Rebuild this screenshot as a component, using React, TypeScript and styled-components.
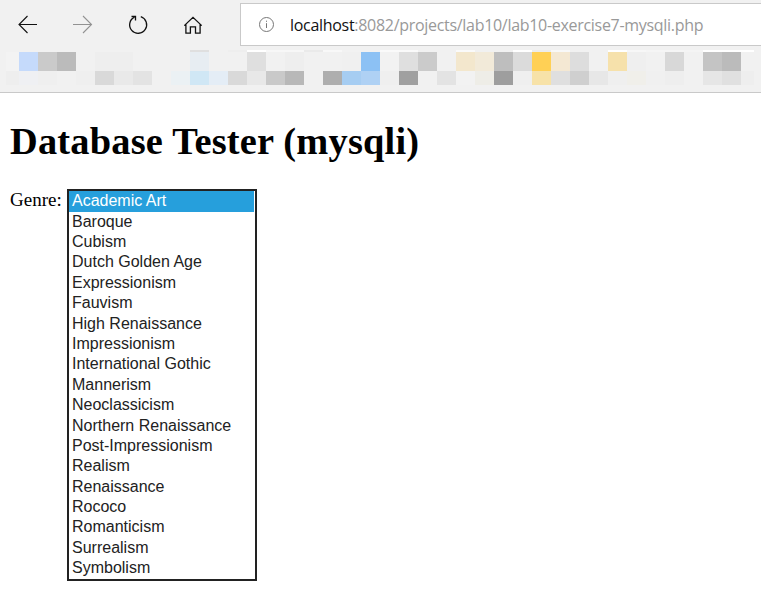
import React from 'react';
import styled, { createGlobalStyle } from 'styled-components';

const GlobalStyle = createGlobalStyle`
  * { box-sizing: border-box; }
  body { margin: 0; background: #fff; overflow: hidden; }
`;

const Browser = styled.div`
  width: 761px;
  height: 598px;
  overflow: hidden;
`;

const Chrome = styled.header`
  height: 93px;
  background: #f1f1f1;
  border-bottom: 1px solid #c9c9c9;
`;

const Toolbar = styled.div`
  display: flex;
  height: 50px;
  padding-top: 3px;
`;

const Navigation = styled.nav`
  display: flex;
  width: 240px;
  height: 43px;
`;

const NavButton = styled.button<{ $muted?: boolean }>`
  width: 55px;
  height: 43px;
  padding: 0;
  border: 0;
  background: none;
  color: ${(p) => (p.$muted ? '#929292' : '#111')};
  svg { display: block; }
`;

const AddressBar = styled.div`
  display: flex;
  align-items: center;
  flex: 1;
  height: 43px;
  padding-left: 17px;
  background: #fff;
  border: 1px solid #c9c9c9;
  border-right: 0;
`;

const Address = styled.span`
  margin-left: 15px;
  font: 16px/24px 'Open Sans', sans-serif;
  letter-spacing: -0.3px;
  white-space: nowrap;
  color: #999;
`;

const Host = styled.span`
  color: #111;
`;

const Favorites = styled.div`
  width: 754px;
  padding-left: 6px;
  overflow: hidden;
`;

const TileRow = styled.div<{ $height: number }>`
  display: flex;
  margin-left: -6px;
  height: ${(p) => p.$height}px;
`;

const Tile = styled.span<{ $color: string }>`
  flex: 0 0 19px;
  background: ${(p) => p.$color};
  &:first-child { border-left: 6px solid #f1f1f1; }
`;

const Page = styled.main`
  padding: 25px 10px 0;
`;

const Title = styled.h1`
  margin: 0;
  font: bold 38.4px/46px 'Liberation Serif', serif;
  letter-spacing: 0.2px;
  white-space: nowrap;
  color: #000;
`;

const Field = styled.div`
  display: flex;
  align-items: flex-start;
  margin-top: 25px;
`;

const Label = styled.label`
  width: 57px;
  font: 19px/22px 'Liberation Serif', serif;
  white-space: nowrap;
  color: #000;
`;

const List = styled.ul`
  width: 190px;
  height: 392px;
  margin: 0;
  padding: 0 1px 0 0;
  list-style: none;
  border: 2px solid #222;
`;

const Option = styled.li<{ $selected: boolean }>`
  height: 20.4px;
  padding-left: 3px;
  font: 16px/20px 'Liberation Sans', sans-serif;
  white-space: nowrap;
  color: ${(p) => (p.$selected ? '#fff' : '#222')};
  background: ${(p) => (p.$selected ? '#269fdc' : 'transparent')};
  &:first-child { height: 20.6px; }
`;

const bg = 'f1f1f1';
const tileRows = [
  {
    height: 2,
    colors: `${bg} ${bg} ${bg} ${bg} ${bg} ${bg} ${bg} ${bg} ${bg} ${bg} dfdfdf ${bg} eeeeee ffffff f7f7f7 f7f7f7 eaeaea f8f8f8 f2f2f2 f1f1f1 fafafa fafafa f1f1f1 f1f1f1 fafafa f1f1f1 f1f1f1 ffffff ececec f8f8f8 f1f1f1 f1f1f1 ffffff f7f7f7 f5f5f5 f5f5f5 f4f4f4 ffffff ffffff ffffff`,
  },
  {
    height: 19,
    colors: `f3f3f3 c5dafb cacaca bbbbbb f1f1f1 eeeeee eeeeee f1f1f1 f1f1f1 f1f1f1 e7edf2 f1f1f1 f1f1f1 dfdfdf f1f1f1 eeeeee f1f1f1 f1f1f1 f0f0f0 8cc1f4 f2f2f2 dfdfdf cbcbcb f1f1f1 f3e7cd f2ead9 bebebe dbdbdb ffd055 f4e8d3 dddddd f1f1f1 f6e1ab efefef f1f1f1 d8d8d8 f1f1f1 c4c4c4 bbbbbb f1f1f1`,
  },
  {
    height: 14,
    colors: `eeeeee eff0f3 efefef f1f1f1 efefef d9d9d9 e9e9e9 e3e3e3 f1f1f1 ebf1f4 d0e7f5 e4edf6 d9d9d9 e8e8e8 c9c9c9 b8b8b8 f1f1f1 aeaeae a6cdf2 afd1f4 efefef a0a0a0 f1f1f1 e3e3e3 f2f2f2 eeede7 9e9e9e efefef f7e2a8 dfdfdf cfcfcf e7e7e7 efefef f0efea f0f0f0 eeeeee f1f1f1 e6e6e6 e0e0e0 eeeeee`,
  },
];

const genres = [
  'Academic Art', 'Baroque', 'Cubism', 'Dutch Golden Age', 'Expressionism',
  'Fauvism', 'High Renaissance', 'Impressionism', 'International Gothic',
  'Mannerism', 'Neoclassicism', 'Northern Renaissance', 'Post-Impressionism',
  'Realism', 'Renaissance', 'Rococo', 'Romanticism', 'Surrealism', 'Symbolism',
];

const Icon = ({ children }: { children: React.ReactNode }) => (
  <svg width="55" height="43" viewBox="0 0 55 43" fill="none" stroke="currentColor" strokeWidth="1.1">
    {children}
  </svg>
);

export default function App() {
  return (
    <Browser>
      <GlobalStyle />
      <Chrome>
        <Toolbar>
          <Navigation>
            <NavButton aria-label="Back">
              <Icon><path d="M37 21.5H19M27.5 13L19 21.5L27.5 30" /></Icon>
            </NavButton>
            <NavButton aria-label="Forward" $muted>
              <Icon><path d="M18 21.5H36.5M28 13L36.5 21.5L28 30" /></Icon>
            </NavButton>
            <NavButton aria-label="Refresh">
              <Icon>
                <path d="M30.8 13.7A8.5 8.5 0 1 1 24.5 14.1" strokeWidth="1.3" />
                <path d="M21.5 13.5H25.5V17.5" strokeWidth="1.3" />
              </Icon>
            </NavButton>
            <NavButton aria-label="Home">
              <Icon>
                <path d="M19.3 22.6L28 14.3L36.7 22.6M20.9 21.1V30.2H25.4V23.9H30.5V30.2H35.1V21.1" strokeWidth="1.3" />
              </Icon>
            </NavButton>
          </Navigation>
          <AddressBar>
            <svg width="17" height="17" viewBox="0 0 17 17" fill="none" stroke="#777">
              <circle cx="8.5" cy="8.5" r="7" />
              <path d="M8.5 7.2V12M8.5 4.7V5.8" />
            </svg>
            <Address><Host>localhost</Host>:8082/projects/lab10/lab10-exercise7-mysqli.php</Address>
          </AddressBar>
        </Toolbar>
        <Favorites>
          {tileRows.map((row) => (
            <TileRow key={row.height} $height={row.height}>
              {row.colors.split(' ').map((color, i) => <Tile key={i} $color={`#${color}`} />)}
            </TileRow>
          ))}
        </Favorites>
      </Chrome>
      <Page>
        <Title>Database Tester (mysqli)</Title>
        <Field>
          <Label>Genre:</Label>
          <List>
            {genres.map((genre, i) => <Option key={genre} $selected={i === 0}>{genre}</Option>)}
          </List>
        </Field>
      </Page>
    </Browser>
  );
}
